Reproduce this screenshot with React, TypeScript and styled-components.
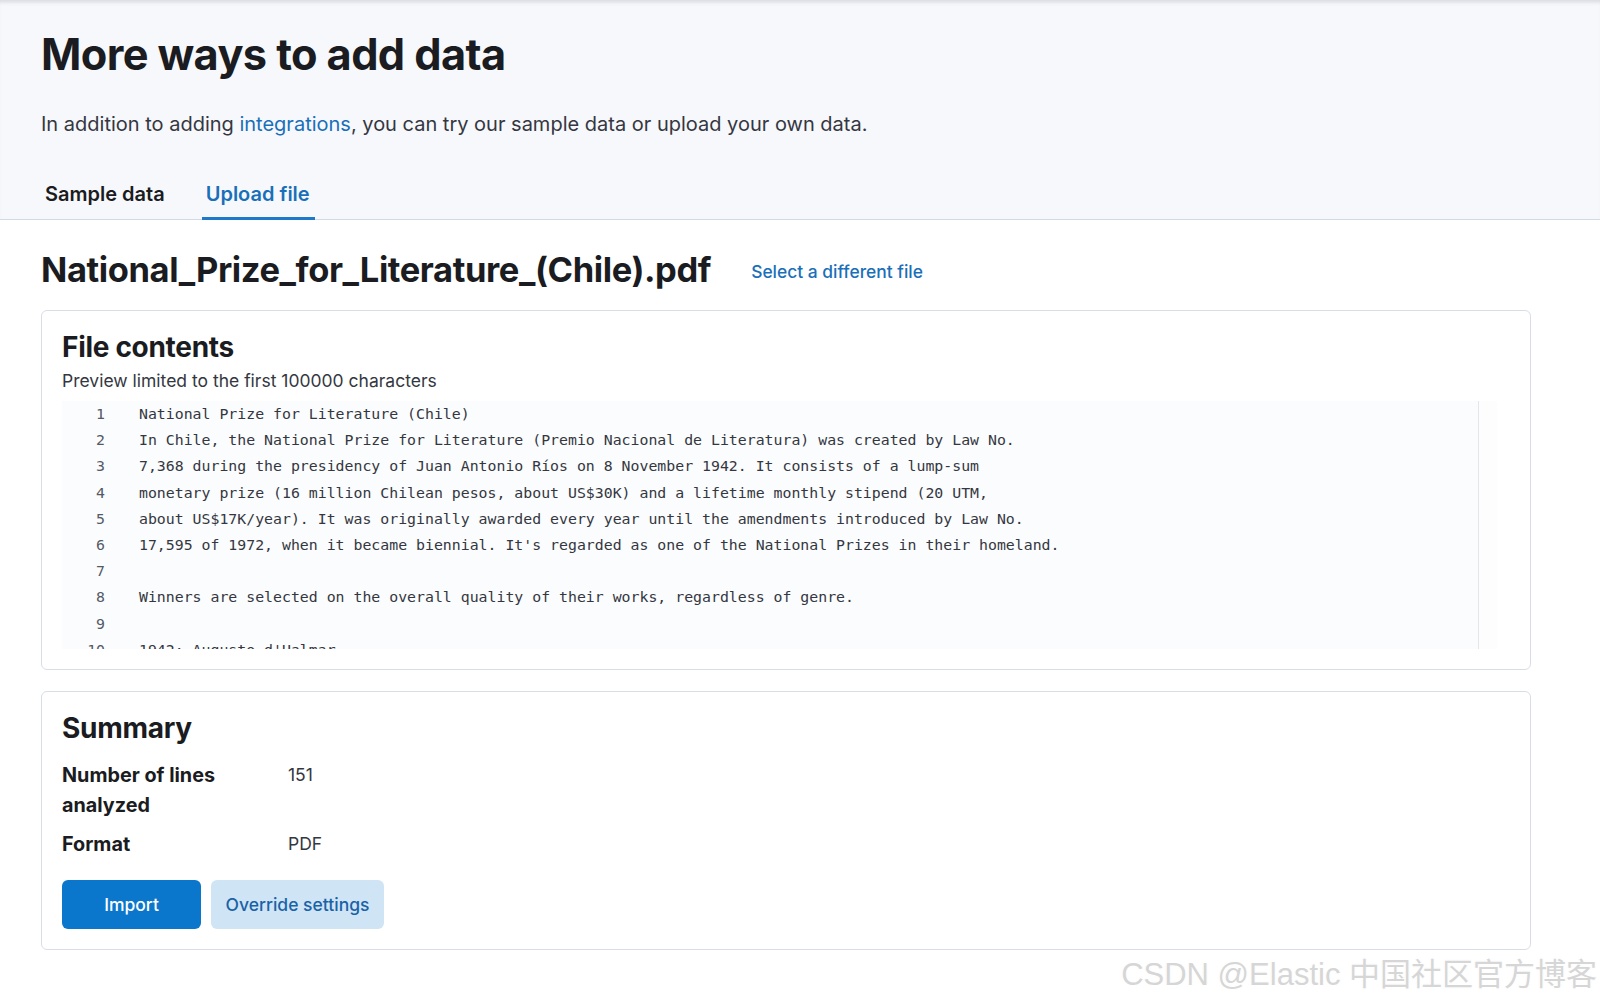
import React from "react";
import styled, { createGlobalStyle } from "styled-components";

const Global = createGlobalStyle`
  html, body { margin: 0; padding: 0; background: #ffffff; }
  body { font-family: Inter, "Noto Sans", sans-serif; color: #1a1c21; }
  * { box-sizing: border-box; }
`;

const Page = styled.div`
  position: relative;
  min-height: 1002px;
  background: #ffffff;
`;

const Header = styled.header`
  background: #f7f8fc;
  border-bottom: 1px solid #d3dae6;
  padding: 30px 41px 0;
  box-shadow: inset 0 5px 4px -3px rgba(60, 66, 80, 0.18);
`;

const Title = styled.h1`
  margin: 0;
  font-size: 43.3px;
  line-height: 48px;
  font-weight: 700;
  letter-spacing: -0.6px;
  color: #1a1c21;
`;

const Lead = styled.p`
  margin: 32px 0 0;
  font-size: 20px;
  line-height: 28px;
  color: #343741;
`;

const Link = styled.a`
  color: #1a6fb9;
  text-decoration: none;
`;

const Tabs = styled.nav`
  display: flex;
  gap: 32px;
  margin-top: 33px;
`;

const Tab = styled.div<{ $active?: boolean }>`
  height: 49px;
  display: flex;
  align-items: center;
  padding: 0 5px 0 4px;
  font-size: 20px;
  font-weight: 600;
  color: ${(p) => (p.$active ? "#1a6fb9" : "#1a1c21")};
  border-bottom: 3px solid ${(p) => (p.$active ? "#1f78c8" : "transparent")};
  margin-bottom: -1px;
`;

const Body = styled.main`
  padding: 27px 69px 0 41px;
`;

const FileRow = styled.div`
  display: flex;
  align-items: center;
  gap: 40px;
`;

const FileName = styled.h2`
  margin: 0;
  font-size: 34.5px;
  line-height: 46px;
  font-weight: 700;
  letter-spacing: -0.4px;
  color: #1a1c21;
`;

const TextLink = styled.a`
  font-size: 17.4px;
  font-weight: 500;
  color: #1a6fb9;
  text-decoration: none;
  margin-top: 2px;
`;

const Card = styled.section<{ $mt: number }>`
  margin-top: ${(p) => p.$mt}px;
  border: 1px solid #d8dde7;
  border-radius: 6px;
  padding: 20px;
  background: #ffffff;
`;

const CardTitle = styled.h3`
  margin: 0;
  font-size: 28px;
  line-height: 32px;
  font-weight: 700;
  letter-spacing: -0.3px;
  color: #1a1c21;
`;

const Caption = styled.p`
  margin: 6px 0 8px;
  font-size: 17.5px;
  line-height: 24px;
  color: #343741;
`;

const CodeBox = styled.div`
  display: flex;
  height: 248px;
  margin-right: 13px;
  background: #fbfcfd;
  overflow: hidden;
`;

const CodeScroll = styled.div`
  flex: 1;
  overflow: hidden;
`;

const CodeLine = styled.div`
  display: flex;
  height: 26.2px;
  align-items: center;
  font-family: "DejaVu Sans Mono", "Liberation Mono", monospace;
  font-size: 14.85px;
  color: #343741;
  white-space: pre;
`;

const LineNo = styled.span`
  width: 43px;
  text-align: right;
  color: #535966;
  flex: none;
`;

const LineText = styled.span`
  margin-left: 34px;
`;

const ScrollTrack = styled.div`
  width: 19px;
  flex: none;
  border-left: 1px solid #e3e6ec;
  background: #fdfdfe;
`;

const Grid = styled.dl`
  display: grid;
  grid-template-columns: 226px 1fr;
  row-gap: 9px;
  margin: 16px 0 0;
`;

const Term = styled.dt`
  font-size: 19.8px;
  line-height: 30px;
  font-weight: 700;
  color: #1a1c21;
  width: 170px;
`;

const Value = styled.dd`
  margin: 0;
  font-size: 17.5px;
  line-height: 30px;
  color: #343741;
`;

const Buttons = styled.div`
  display: flex;
  gap: 10px;
  margin-top: 21px;
`;

const Button = styled.button<{ $primary?: boolean; $w: number }>`
  width: ${(p) => p.$w}px;
  height: 49px;
  border: none;
  border-radius: 6px;
  font-family: Inter, "Noto Sans", sans-serif;
  font-size: 17.5px;
  font-weight: 500;
  background: ${(p) => (p.$primary ? "#0b77cc" : "#cfe5f6")};
  color: ${(p) => (p.$primary ? "#ffffff" : "#1a62a6")};
`;

const Watermark = styled.div`
  position: absolute;
  right: 3px;
  top: 955px;
  font-family: "Liberation Sans", "Noto Sans CJK SC", sans-serif;
  font-size: 31px;
  line-height: 40px;
  color: #d6d6d6;
  text-shadow: 1px 1px 0 #ffffff, -1px -1px 0 #ffffff, 1px -1px 0 #ffffff, -1px 1px 0 #ffffff, 0 0 1px #a0a0a0;
  white-space: nowrap;
`;

const lines = [
  "National Prize for Literature (Chile)",
  "In Chile, the National Prize for Literature (Premio Nacional de Literatura) was created by Law No.",
  "7,368 during the presidency of Juan Antonio Ríos on 8 November 1942. It consists of a lump-sum",
  "monetary prize (16 million Chilean pesos, about US$30K) and a lifetime monthly stipend (20 UTM,",
  "about US$17K/year). It was originally awarded every year until the amendments introduced by Law No.",
  "17,595 of 1972, when it became biennial. It's regarded as one of the National Prizes in their homeland.",
  "",
  "Winners are selected on the overall quality of their works, regardless of genre.",
  "",
  "1942: Augusto d'Halmar",
];

export default function App() {
  return (
    <Page>
      <Global />
      <Header>
        <Title>More ways to add data</Title>
        <Lead>
          In addition to adding <Link href="#">integrations</Link>, you can try our sample data or upload your own data.
        </Lead>
        <Tabs>
          <Tab>Sample data</Tab>
          <Tab $active>Upload file</Tab>
        </Tabs>
      </Header>
      <Body>
        <FileRow>
          <FileName>National_Prize_for_Literature_(Chile).pdf</FileName>
          <TextLink href="#">Select a different file</TextLink>
        </FileRow>
        <Card $mt={17}>
          <CardTitle>File contents</CardTitle>
          <Caption>Preview limited to the first 100000 characters</Caption>
          <CodeBox>
            <CodeScroll>
              {lines.map((l, i) => (
                <CodeLine key={i}>
                  <LineNo>{i + 1}</LineNo>
                  <LineText>{l}</LineText>
                </CodeLine>
              ))}
            </CodeScroll>
            <ScrollTrack />
          </CodeBox>
        </Card>
        <Card $mt={21}>
          <CardTitle>Summary</CardTitle>
          <Grid>
            <Term>Number of lines analyzed</Term>
            <Value>151</Value>
            <Term>Format</Term>
            <Value>PDF</Value>
          </Grid>
          <Buttons>
            <Button $primary $w={139}>Import</Button>
            <Button $w={173}>Override settings</Button>
          </Buttons>
        </Card>
      </Body>
      <Watermark>CSDN @Elastic 中国社区官方博客</Watermark>
    </Page>
  );
}
